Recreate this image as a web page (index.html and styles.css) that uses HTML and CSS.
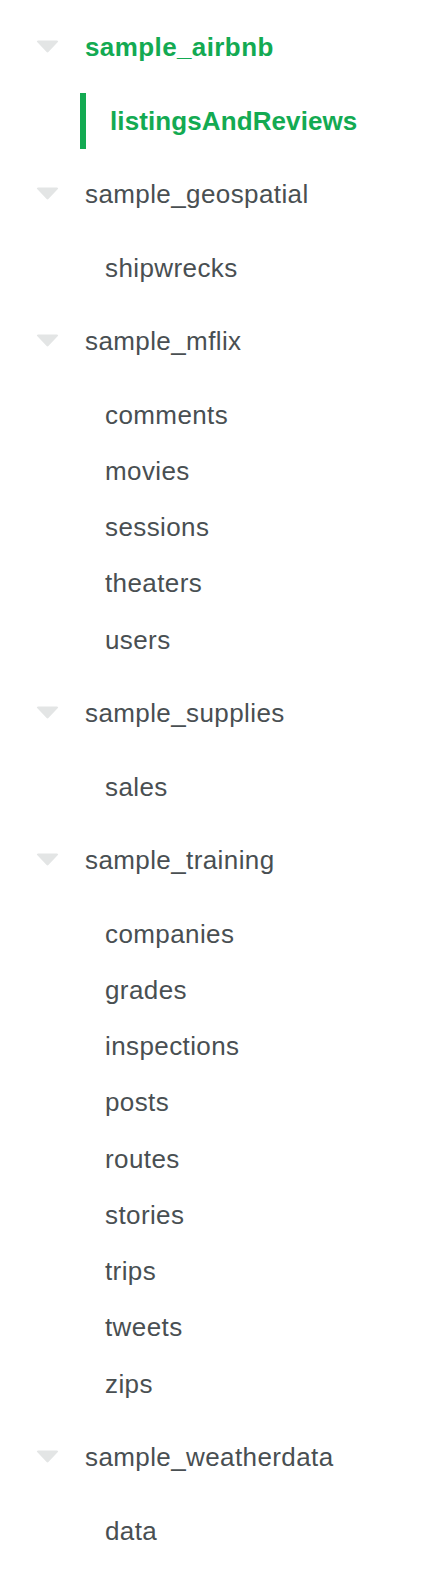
FILE: index.html
```html
<!DOCTYPE html>
<html>
<head>
<meta charset="utf-8">
<link rel="stylesheet" href="styles.css">
</head>
<body>
<div class="tree">
  <div class="db active">
    <div class="db-row">
      <svg class="caret" viewBox="0 0 23 13" width="23" height="13"><path d="M2.2 0.5 H20.8 Q23 0.5 21.6 2.2 L12.6 11.8 Q11.5 13 10.4 11.8 L1.4 2.2 Q0 0.5 2.2 0.5 Z"/></svg>
      <span class="db-name">sample_airbnb</span>
    </div>
    <ul class="colls">
      <li class="coll active">listingsAndReviews</li>
    </ul>
  </div>
  <div class="db">
    <div class="db-row">
      <svg class="caret" viewBox="0 0 23 13" width="23" height="13"><path d="M2.2 0.5 H20.8 Q23 0.5 21.6 2.2 L12.6 11.8 Q11.5 13 10.4 11.8 L1.4 2.2 Q0 0.5 2.2 0.5 Z"/></svg>
      <span class="db-name">sample_geospatial</span>
    </div>
    <ul class="colls">
      <li class="coll">shipwrecks</li>
    </ul>
  </div>
  <div class="db">
    <div class="db-row">
      <svg class="caret" viewBox="0 0 23 13" width="23" height="13"><path d="M2.2 0.5 H20.8 Q23 0.5 21.6 2.2 L12.6 11.8 Q11.5 13 10.4 11.8 L1.4 2.2 Q0 0.5 2.2 0.5 Z"/></svg>
      <span class="db-name">sample_mflix</span>
    </div>
    <ul class="colls">
      <li class="coll">comments</li>
      <li class="coll">movies</li>
      <li class="coll">sessions</li>
      <li class="coll">theaters</li>
      <li class="coll">users</li>
    </ul>
  </div>
  <div class="db">
    <div class="db-row">
      <svg class="caret" viewBox="0 0 23 13" width="23" height="13"><path d="M2.2 0.5 H20.8 Q23 0.5 21.6 2.2 L12.6 11.8 Q11.5 13 10.4 11.8 L1.4 2.2 Q0 0.5 2.2 0.5 Z"/></svg>
      <span class="db-name">sample_supplies</span>
    </div>
    <ul class="colls">
      <li class="coll">sales</li>
    </ul>
  </div>
  <div class="db">
    <div class="db-row">
      <svg class="caret" viewBox="0 0 23 13" width="23" height="13"><path d="M2.2 0.5 H20.8 Q23 0.5 21.6 2.2 L12.6 11.8 Q11.5 13 10.4 11.8 L1.4 2.2 Q0 0.5 2.2 0.5 Z"/></svg>
      <span class="db-name">sample_training</span>
    </div>
    <ul class="colls">
      <li class="coll">companies</li>
      <li class="coll">grades</li>
      <li class="coll">inspections</li>
      <li class="coll">posts</li>
      <li class="coll">routes</li>
      <li class="coll">stories</li>
      <li class="coll">trips</li>
      <li class="coll">tweets</li>
      <li class="coll">zips</li>
    </ul>
  </div>
  <div class="db">
    <div class="db-row">
      <svg class="caret" viewBox="0 0 23 13" width="23" height="13"><path d="M2.2 0.5 H20.8 Q23 0.5 21.6 2.2 L12.6 11.8 Q11.5 13 10.4 11.8 L1.4 2.2 Q0 0.5 2.2 0.5 Z"/></svg>
      <span class="db-name">sample_weatherdata</span>
    </div>
    <ul class="colls">
      <li class="coll">data</li>
    </ul>
  </div>
</div>
</body>
</html>
```

FILE: styles.css
```css
html, body {
  margin: 0;
  padding: 0;
  background: #ffffff;
}

body {
  font-family: "Liberation Sans", Arial, sans-serif;
  font-size: 26px;
  color: #494f52;
  letter-spacing: 0.4px;
}

.tree {
  padding-top: 19px;
  display: flex;
  flex-direction: column;
}

.db-row {
  height: 56.25px;
  display: flex;
  align-items: center;
  padding-left: 36px;
}

.caret {
  width: 23px;
  height: 13px;
  fill: #e3e5e5;
  flex: none;
  margin-right: 26px;
  margin-top: -2px;
}

.db-name {
  line-height: 56.25px;
  white-space: nowrap;
}

.db.active .db-name {
  color: #13aa52;
  font-weight: 700;
  letter-spacing: 0.4px;
}

.colls {
  list-style: none;
  margin: 0;
  padding: 17.25px 0;
  display: flex;
  flex-direction: column;
}

.coll {
  height: 56.25px;
  line-height: 56.25px;
  margin-left: 80px;
  padding-left: 25px;
  white-space: nowrap;
}

.coll.active {
  border-left: 6px solid #13aa52;
  padding-left: 24px;
  color: #13aa52;
  font-weight: 700;
  letter-spacing: 0.1px;
}
```
